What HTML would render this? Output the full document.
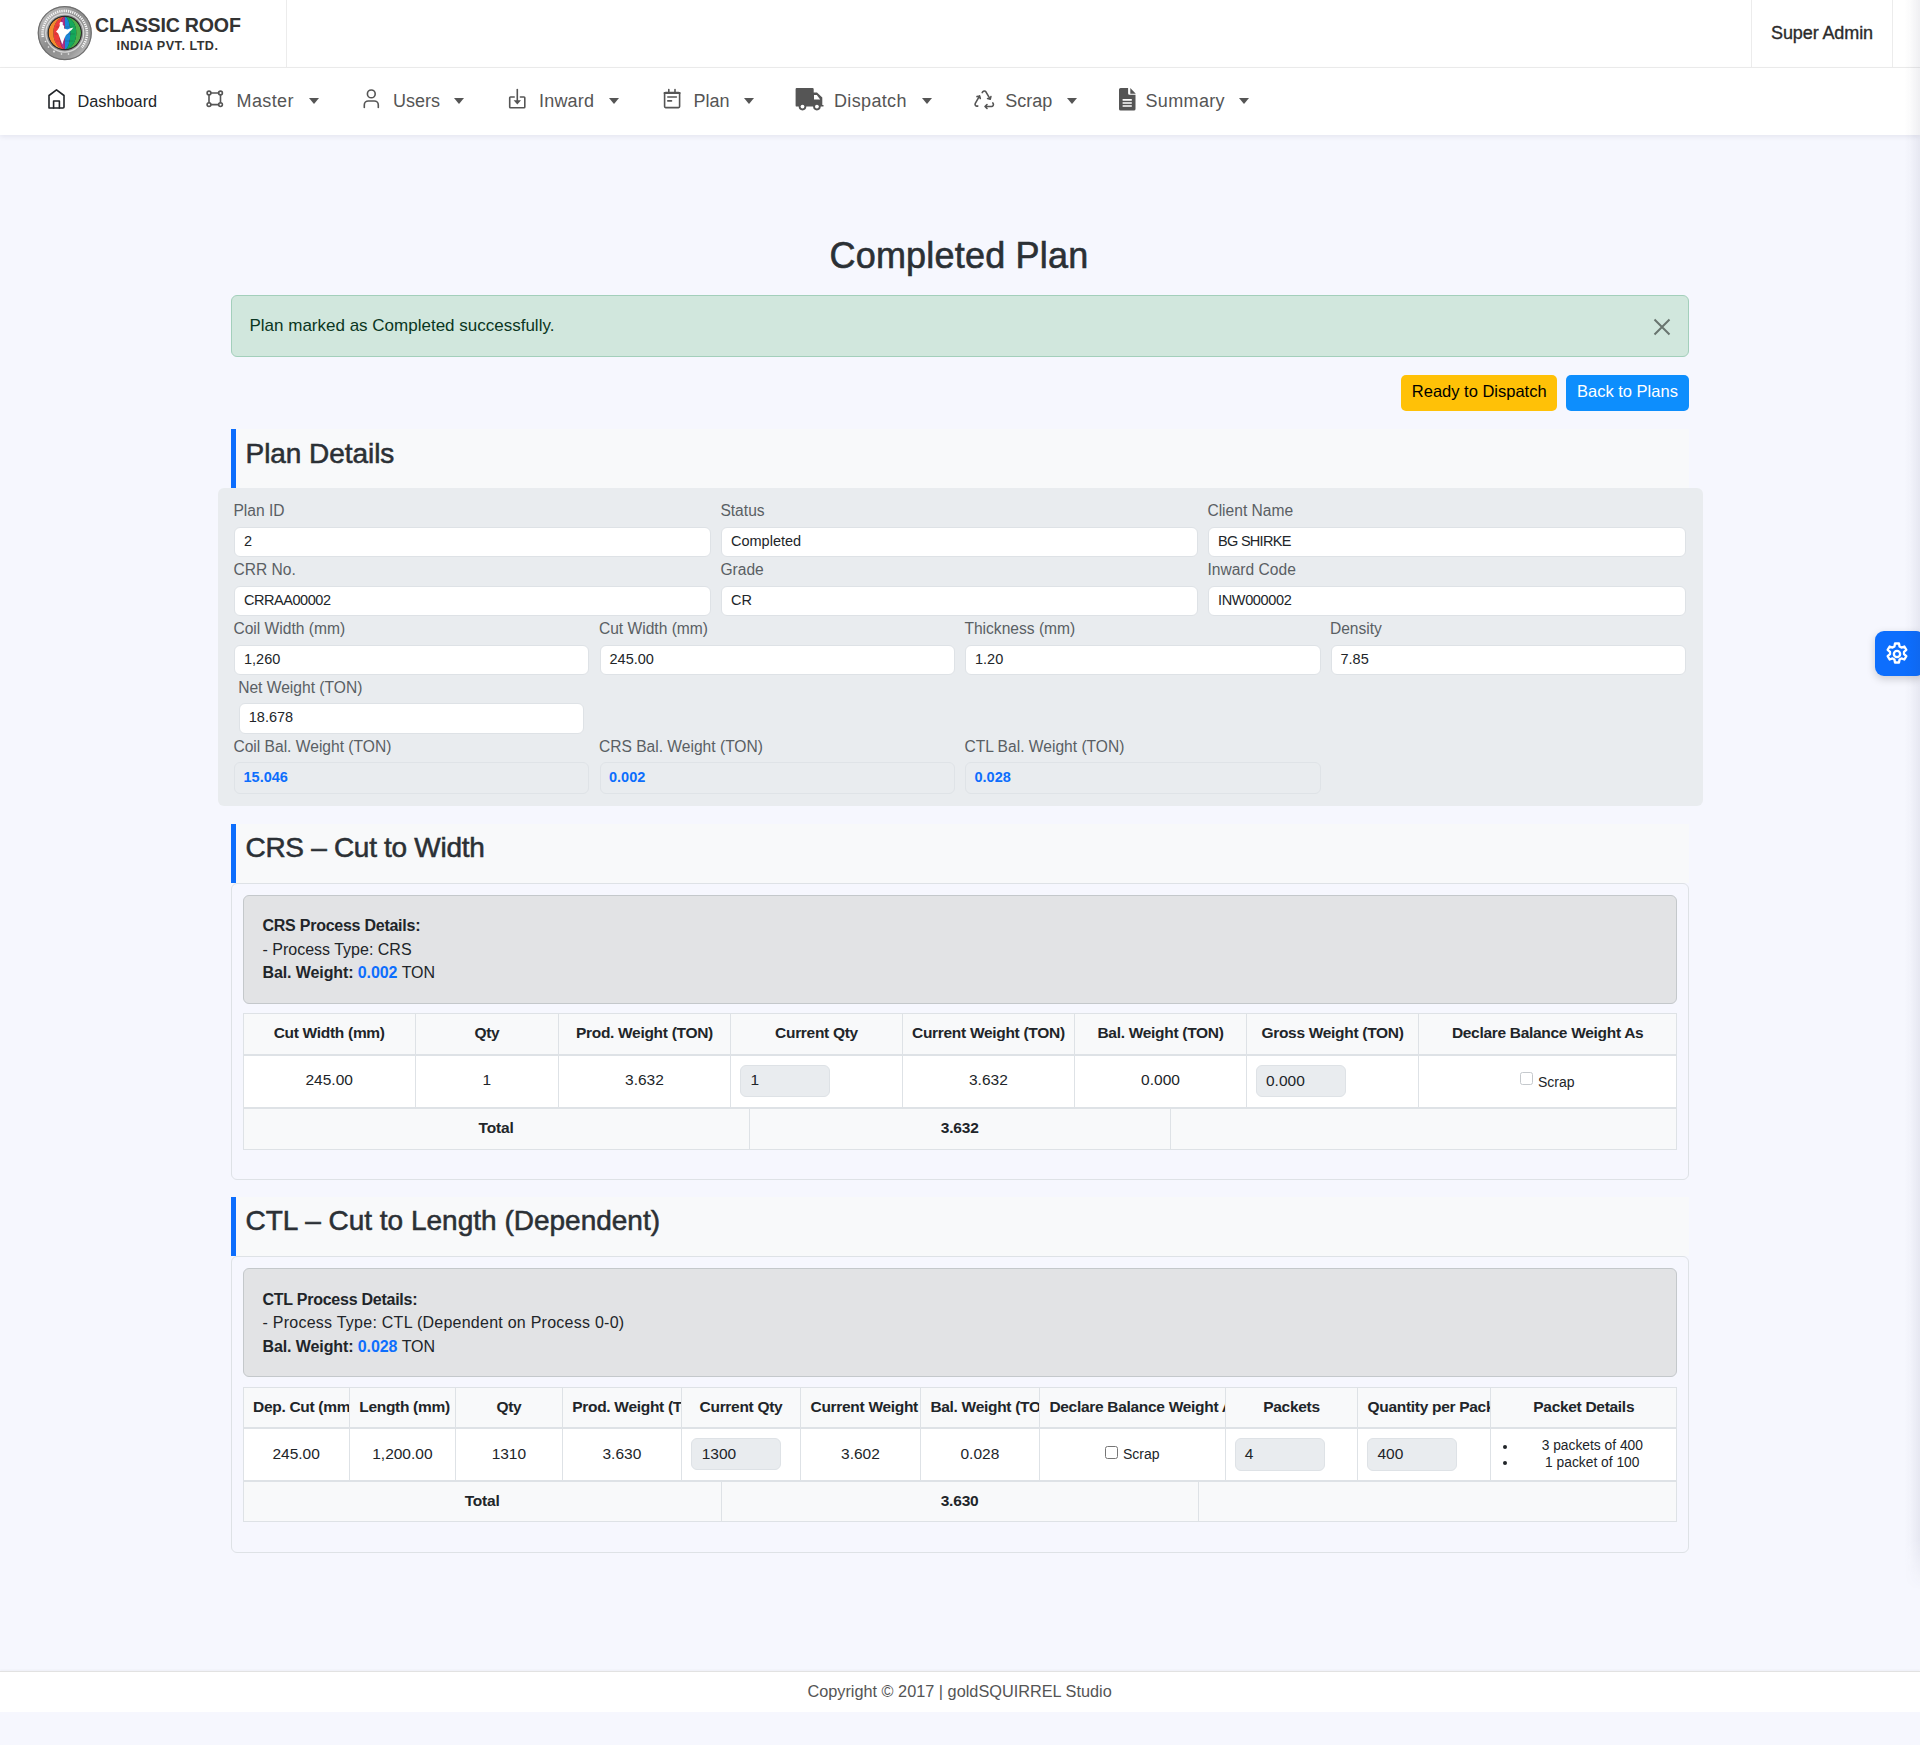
<!DOCTYPE html>
<html><head><meta charset="utf-8">
<style>
*{box-sizing:border-box;margin:0;padding:0}
html,body{width:1920px;height:1745px;overflow:hidden}
body{background:#f6f7fe;font-family:"Liberation Sans",sans-serif;color:#212529;position:relative;font-size:16px;line-height:1}
.t{position:absolute;white-space:nowrap;line-height:1}
.b{position:absolute}
.ico{position:absolute}
.caret{position:absolute;top:98px;width:0;height:0;border-left:5px solid transparent;border-right:5px solid transparent;border-top:6px solid #555}
.clip{position:absolute;overflow:hidden;white-space:nowrap;line-height:1}
</style></head><body>

<div class="b" style="left:0.00px;top:0.00px;width:1920.00px;height:67.00px;background:#fff"></div>
<div class="b" style="left:0.00px;top:67.00px;width:1920.00px;height:1.00px;background:#ededed"></div>
<svg class="ico" style="left:0;top:0" width="100" height="67" viewBox="0 0 100 67">
<defs>
<linearGradient id="ring" x1="0" y1="0" x2="1" y2="1"><stop offset="0" stop-color="#cfcfcf"/><stop offset=".45" stop-color="#8d8d8d"/><stop offset=".75" stop-color="#9a9a9a"/><stop offset="1" stop-color="#e2e2e2"/></linearGradient>
<clipPath id="gl"><circle cx="64.8" cy="33.0" r="16.2"/></clipPath>
</defs>
<circle cx="64.75" cy="33.1" r="27" fill="url(#ring)"/>
<circle cx="64.75" cy="33.1" r="26.5" fill="none" stroke="#6f6f6f" stroke-width="1.2"/>
<circle cx="64.75" cy="33.1" r="19" fill="none" stroke="#f2f2f2" stroke-width="1.2" opacity=".7"/>
<path d="M42.89 36.95 A22.2 22.2 0 1 1 81.76 47.37" fill="none" stroke="#f4f4f4" stroke-width="2.6" stroke-dasharray="1.3 0.9"/>
<circle cx="64.8" cy="33.0" r="17.2" fill="#2a2a2a"/>
<g clip-path="url(#gl)"><path d="M64.80 16.80 A16.20 16.20 0 0 1 64.80 49.20 A11.50 16.20 0 0 0 64.80 16.80Z" fill="#4fae4a"/><path d="M64.80 16.80 A11.50 16.20 0 0 1 64.80 49.20 A5.50 16.20 0 0 0 64.80 16.80Z" fill="#14a85a"/><path d="M64.80 16.80 A5.50 16.20 0 0 1 64.80 49.20 Z" fill="#1a86d6"/><path d="M64.80 16.80 A5.50 16.20 0 0 0 64.80 49.20 Z" fill="#b02f8a"/><path d="M64.80 16.80 A11.50 16.20 0 0 0 64.80 49.20 A5.50 16.20 0 0 1 64.80 16.80Z" fill="#ee3b39"/><path d="M64.80 16.80 A16.20 16.20 0 0 0 64.80 49.20 A11.50 16.20 0 0 1 64.80 16.80Z" fill="#f28a2e"/>
<path d="M56.3 27.0 H73.3 M54.8 34.0 H74.8 M56.3 41.0 H73.3" stroke="#333" stroke-width=".5" opacity=".5"/>
</g>
<path fill="#fff" d="M60.5 21.8 L63 22.6 L62.6 24.5 L64.2 26.2 L64 28.6 L67.5 29.5 L70.5 28.2 L73.4 27.6 L71.5 30 L69.6 31.5 L68.2 33.2 L66 35 L64.5 38 L63.2 41.5 L62.4 44.6 L61 41 L59.5 37 L58.2 33.5 L56 31.6 L57.5 30 L58.8 28 L59.8 25.5 L59.5 23.5 Z"/>
<g fill="#fff" opacity=".85"><circle cx="45.5" cy="41.5" r=".8"/><circle cx="48.5" cy="47" r=".8"/><circle cx="54" cy="51.5" r=".9"/><circle cx="61.5" cy="54" r=".8"/><circle cx="68.5" cy="54" r=".8"/></g>
</svg>
<div class="t" style="left:95.00px;top:16.40px;font-size:19.6px;color:#333;font-weight:700;letter-spacing:-0.2px;">CLASSIC ROOF</div>
<div class="t" style="left:116.50px;top:39.63px;font-size:12.6px;color:#333;font-weight:700;letter-spacing:0.5px;">INDIA PVT. LTD.</div>
<div class="b" style="left:286.00px;top:0.00px;width:1.00px;height:67.00px;background:#ececec"></div>
<div class="b" style="left:1751.00px;top:0.00px;width:1.00px;height:67.00px;background:#ececec"></div>
<div class="b" style="left:1892.00px;top:0.00px;width:1.00px;height:67.00px;background:#ececec"></div>
<div class="t" style="left:1771.00px;top:23.96px;font-size:18px;color:#2b2b2b;letter-spacing:-0.1px;-webkit-text-stroke:0.35px #2b2b2b;">Super Admin</div>
<div class="b" style="left:0.00px;top:68.00px;width:1920.00px;height:67.00px;background:#fff;box-shadow:0 2px 5px rgba(20,20,60,.07)"></div>
<div class="t" style="left:77.50px;top:92.50px;font-size:16.3px;color:#212529;">Dashboard</div>
<div class="t" style="left:236.50px;top:91.76px;font-size:18px;color:#555;letter-spacing:0.4px;">Master</div>
<div class="caret" style="left:309px"></div>
<div class="t" style="left:393.00px;top:91.76px;font-size:18px;color:#555;">Users</div>
<div class="caret" style="left:454px"></div>
<div class="t" style="left:539.00px;top:91.76px;font-size:18px;color:#555;letter-spacing:0.2px;">Inward</div>
<div class="caret" style="left:608.5px"></div>
<div class="t" style="left:693.50px;top:91.76px;font-size:18px;color:#555;">Plan</div>
<div class="caret" style="left:744px"></div>
<div class="t" style="left:834.00px;top:91.76px;font-size:18px;color:#555;letter-spacing:0.35px;">Dispatch</div>
<div class="caret" style="left:922px"></div>
<div class="t" style="left:1005.30px;top:91.76px;font-size:18px;color:#555;">Scrap</div>
<div class="caret" style="left:1067px"></div>
<div class="t" style="left:1145.50px;top:91.76px;font-size:18px;color:#555;letter-spacing:0.35px;">Summary</div>
<div class="caret" style="left:1239px"></div>
<svg class="ico" style="left:0;top:0" width="1300" height="135" viewBox="0 0 1300 135">
<g fill="none" stroke-width="1.6" stroke-linejoin="round" stroke-linecap="round">
<path stroke="#212529" d="M49 108 V95.5 L56.5 89.8 L64 95.5 V107 a1 1 0 0 1 -1 1 H50 a1 1 0 0 1 -1 -1Z"/>
<path stroke="#212529" d="M53.6 108 V101 H59.4 V108"/>
<g stroke="#555">
<circle cx="209" cy="93" r="1.9"/><circle cx="220.5" cy="93" r="1.9"/><circle cx="209" cy="104.6" r="1.9"/><circle cx="220.5" cy="104.6" r="1.9"/>
<path d="M210.9 93H218.6M210.9 104.6H218.6M209 94.9V102.7M220.5 94.9V102.7"/>
<circle cx="371.3" cy="93.9" r="3.9"/>
<path d="M364.3 107.5 V105 a4 4 0 0 1 4 -4 h6 a4 4 0 0 1 4 4 V107.5"/>
<path d="M514.2 97 H510.5 a0.8 0.8 0 0 0 -0.8 0.8 V107 a0.8 0.8 0 0 0 0.8 0.8 H524 a0.8 0.8 0 0 0 0.8 -0.8 V97.8 a0.8 0.8 0 0 0 -0.8 -0.8 H520.4"/>
<path d="M517.3 89.5 V101"/>
<rect x="664.6" y="92.6" width="15" height="15" rx="1"/>
<path d="M668.8 89.5V92M675 89.5V92M667.8 97H676.4M667.8 100.9H671.5"/>
<path d="M664.6 93 H679.6" stroke-width="2.2"/>
<path d="M987 104.5l-2 2l2 2 M985 106.5h6.6a1.9 1.9 0 0 0 1.7 -2.6l-.5 -1 M980.3 98.5l-.7 -2.6l-2.6 .7 M979.6 95.9l-4.3 7.4a1.9 1.9 0 0 0 1.4 2.8l1.1 0 M987.6 98.5l2.6 .7l.7 -2.6 M990.2 99.2l-4.3 -7.4a1.9 1.9 0 0 0 -3.1 -.1l-.6 .9"/>
</g></g>
<path fill="#555" d="M513.6 100.3 H521 L517.3 104.6Z"/>
<g fill="#555">
<path d="M797 88 H812.5 a1.2 1.2 0 0 1 1.2 1.2 V92.4 H817 L822.3 97.4 V104.9 H823.5 V106.6 H796.8 a1.2 1.2 0 0 1 -1.2 -1.2 V89.2 a1.2 1.2 0 0 1 1.4 -1.2Z"/>
<circle cx="802.5" cy="106.6" r="3.8"/><circle cx="816.9" cy="106.6" r="3.8"/>
</g>
<path fill="#fff" d="M814 94.9 H816.8 L820.2 99.5 H814Z"/>
<circle cx="802.5" cy="106.6" r="1.9" fill="#fff"/><circle cx="816.9" cy="106.6" r="1.9" fill="#fff"/>
<path fill="#555" d="M1120.6 87.9 H1128.1 V93.3 a1.5 1.5 0 0 0 1.5 1.5 H1135.5 V109 a1.6 1.6 0 0 1 -1.6 1.6 H1120.6 a1.6 1.6 0 0 1 -1.6 -1.6 V89.5 a1.6 1.6 0 0 1 1.6 -1.6Z"/>
<path fill="#555" d="M1130.3 88 L1135.8 93.7 H1130.3Z"/>
<path stroke="#fff" stroke-width="1.7" d="M1122.6 99.9H1131.8M1122.6 103H1131.8M1122.6 106H1131.8"/>
</svg>
<div class="t" style="left:829.50px;top:237.52px;font-size:36px;color:#2b3035;letter-spacing:0.2px;-webkit-text-stroke:0.6px #2b3035;">Completed Plan</div>
<div class="b" style="left:231.00px;top:295.00px;width:1458.00px;height:62.00px;background:#d1e7dd;border:1px solid #a3cfbb;border-radius:6px"></div>
<div class="t" style="left:249.50px;top:316.61px;font-size:17px;color:#0a3622;">Plan marked as Completed successfully.</div>
<svg class="ico" style="left:1652px;top:317px" width="20" height="20" viewBox="0 0 20 20"><path d="M2.5 2.5L17.5 17.5M17.5 2.5L2.5 17.5" stroke="#69756f" stroke-width="2"/></svg>
<div class="b" style="left:1401.00px;top:375.00px;width:156.00px;height:36.00px;background:#ffc107;border-radius:5px"></div>
<div class="t" style="left:1411.80px;top:382.83px;font-size:16.5px;color:#000;">Ready to Dispatch</div>
<div class="b" style="left:1566.00px;top:375.00px;width:123.00px;height:36.00px;background:#0d8efd;border-radius:5px"></div>
<div class="t" style="left:1577.00px;top:382.83px;font-size:16.5px;color:#fff;">Back to Plans</div>
<div class="b" style="left:231.00px;top:429.00px;width:1458.00px;height:59.00px;background:#f8f9fa"></div>
<div class="b" style="left:231.00px;top:429.00px;width:5.00px;height:59.00px;background:#0d6efd"></div>
<div class="t" style="left:245.50px;top:439.59px;font-size:28px;color:#2b3035;letter-spacing:-0.05px;-webkit-text-stroke:0.55px #2b3035;">Plan Details</div>
<div class="b" style="left:218.00px;top:488.00px;width:1485.00px;height:318.00px;background:#e9ecef;border-radius:6px"></div>
<div class="t" style="left:233.40px;top:502.79px;font-size:15.6px;color:#5a5f64;">Plan ID</div>
<div class="b" style="left:234.00px;top:527.00px;width:477.00px;height:30.00px;background:#fff;border:1px solid #dee2e6;border-radius:6px"></div>
<div class="t" style="left:244.00px;top:533.92px;font-size:14.5px;color:#212529;">2</div>
<div class="t" style="left:720.40px;top:502.79px;font-size:15.6px;color:#5a5f64;">Status</div>
<div class="b" style="left:721.00px;top:527.00px;width:477.00px;height:30.00px;background:#fff;border:1px solid #dee2e6;border-radius:6px"></div>
<div class="t" style="left:731.00px;top:533.92px;font-size:14.5px;color:#212529;">Completed</div>
<div class="t" style="left:1207.40px;top:502.79px;font-size:15.6px;color:#5a5f64;">Client Name</div>
<div class="b" style="left:1208.00px;top:527.00px;width:478.00px;height:30.00px;background:#fff;border:1px solid #dee2e6;border-radius:6px"></div>
<div class="t" style="left:1218.00px;top:533.92px;font-size:14.5px;color:#212529;letter-spacing:-0.7px;">BG SHIRKE</div>
<div class="t" style="left:233.40px;top:562.09px;font-size:15.6px;color:#5a5f64;">CRR No.</div>
<div class="b" style="left:234.00px;top:586.00px;width:477.00px;height:30.00px;background:#fff;border:1px solid #dee2e6;border-radius:6px"></div>
<div class="t" style="left:244.00px;top:592.92px;font-size:14.5px;color:#212529;letter-spacing:-0.45px;">CRRAA00002</div>
<div class="t" style="left:720.40px;top:562.09px;font-size:15.6px;color:#5a5f64;">Grade</div>
<div class="b" style="left:721.00px;top:586.00px;width:477.00px;height:30.00px;background:#fff;border:1px solid #dee2e6;border-radius:6px"></div>
<div class="t" style="left:731.00px;top:592.92px;font-size:14.5px;color:#212529;">CR</div>
<div class="t" style="left:1207.40px;top:562.09px;font-size:15.6px;color:#5a5f64;">Inward Code</div>
<div class="b" style="left:1208.00px;top:586.00px;width:478.00px;height:30.00px;background:#fff;border:1px solid #dee2e6;border-radius:6px"></div>
<div class="t" style="left:1218.00px;top:592.92px;font-size:14.5px;color:#212529;letter-spacing:-0.35px;">INW000002</div>
<div class="t" style="left:233.40px;top:620.79px;font-size:15.6px;color:#5a5f64;">Coil Width (mm)</div>
<div class="b" style="left:234.00px;top:645.00px;width:355.00px;height:30.00px;background:#fff;border:1px solid #dee2e6;border-radius:6px"></div>
<div class="t" style="left:244.00px;top:651.92px;font-size:14.5px;color:#212529;">1,260</div>
<div class="t" style="left:598.90px;top:620.79px;font-size:15.6px;color:#5a5f64;">Cut Width (mm)</div>
<div class="b" style="left:599.50px;top:645.00px;width:355.50px;height:30.00px;background:#fff;border:1px solid #dee2e6;border-radius:6px"></div>
<div class="t" style="left:609.50px;top:651.92px;font-size:14.5px;color:#212529;">245.00</div>
<div class="t" style="left:964.40px;top:620.79px;font-size:15.6px;color:#5a5f64;">Thickness (mm)</div>
<div class="b" style="left:965.00px;top:645.00px;width:355.50px;height:30.00px;background:#fff;border:1px solid #dee2e6;border-radius:6px"></div>
<div class="t" style="left:975.00px;top:651.92px;font-size:14.5px;color:#212529;">1.20</div>
<div class="t" style="left:1329.90px;top:620.79px;font-size:15.6px;color:#5a5f64;">Density</div>
<div class="b" style="left:1330.50px;top:645.00px;width:355.50px;height:30.00px;background:#fff;border:1px solid #dee2e6;border-radius:6px"></div>
<div class="t" style="left:1340.50px;top:651.92px;font-size:14.5px;color:#212529;">7.85</div>
<div class="t" style="left:238.15px;top:679.79px;font-size:15.6px;color:#5a5f64;">Net Weight (TON)</div>
<div class="b" style="left:238.75px;top:703.00px;width:345.25px;height:30.50px;background:#fff;border:1px solid #dee2e6;border-radius:6px"></div>
<div class="t" style="left:248.75px;top:709.92px;font-size:14.5px;color:#212529;">18.678</div>
<div class="t" style="left:233.40px;top:738.79px;font-size:15.6px;color:#5a5f64;">Coil Bal. Weight (TON)</div>
<div class="b" style="left:234.00px;top:761.50px;width:355.00px;height:32.00px;background:#e9ecef;border:1px solid #dfe3e7;border-radius:6px"></div>
<div class="t" style="left:243.50px;top:770.22px;font-size:14.5px;color:#0d6efd;font-weight:700;">15.046</div>
<div class="t" style="left:598.90px;top:738.79px;font-size:15.6px;color:#5a5f64;">CRS Bal. Weight (TON)</div>
<div class="b" style="left:599.50px;top:761.50px;width:355.50px;height:32.00px;background:#e9ecef;border:1px solid #dfe3e7;border-radius:6px"></div>
<div class="t" style="left:609.00px;top:770.22px;font-size:14.5px;color:#0d6efd;font-weight:700;">0.002</div>
<div class="t" style="left:964.40px;top:738.79px;font-size:15.6px;color:#5a5f64;">CTL Bal. Weight (TON)</div>
<div class="b" style="left:965.00px;top:761.50px;width:355.50px;height:32.00px;background:#e9ecef;border:1px solid #dfe3e7;border-radius:6px"></div>
<div class="t" style="left:974.50px;top:770.22px;font-size:14.5px;color:#0d6efd;font-weight:700;">0.028</div>
<div class="b" style="left:231.00px;top:824.00px;width:1458.00px;height:59.00px;background:#f8f9fa"></div>
<div class="b" style="left:231.00px;top:824.00px;width:5.00px;height:59.00px;background:#0d6efd"></div>
<div class="t" style="left:245.50px;top:834.39px;font-size:28px;color:#2b3035;letter-spacing:-0.3px;-webkit-text-stroke:0.55px #2b3035;">CRS – Cut to Width</div>
<div class="b" style="left:231.00px;top:883.00px;width:1458.00px;height:297.00px;border:1px solid #dee2e6;border-radius:6px"></div>
<div class="b" style="left:243.00px;top:895.00px;width:1434.00px;height:109.00px;background:#e2e3e5;border:1px solid #c4c8cb;border-radius:6px"></div>
<div class="t" style="left:262.50px;top:918.45px;font-size:16px;color:#212529;font-weight:700;letter-spacing:-0.25px;">CRS Process Details:</div>
<div class="t" style="left:262.50px;top:941.95px;font-size:16px;color:#212529;">- Process Type: CRS</div>
<div class="t" style="left:262.50px;top:965.45px;font-size:16px;color:#212529;font-weight:700;letter-spacing:-0.1px;">Bal. Weight: <span style="color:#0d6efd">0.002</span> <span style="font-weight:400">TON</span></div>
<div class="b" style="left:243.00px;top:1013.00px;width:1434.00px;height:42.00px;background:#f8f9fa;border:1px solid #dee2e6;border-bottom:none"></div>
<div class="b" style="left:243.00px;top:1055.00px;width:1434.00px;height:52.50px;background:#fff;border-left:1px solid #dee2e6;border-right:1px solid #dee2e6"></div>
<div class="b" style="left:243.00px;top:1107.50px;width:1434.00px;height:42.00px;background:#f8f9fa;border:1px solid #dee2e6"></div>
<div class="b" style="left:243.00px;top:1054.00px;width:1434.00px;height:2.00px;background:#dee2e6"></div>
<div class="b" style="left:243.00px;top:1106.50px;width:1434.00px;height:2.00px;background:#dee2e6"></div>
<div class="b" style="left:414.90px;top:1013.00px;width:1.00px;height:94.50px;background:#dee2e6"></div>
<div class="b" style="left:557.90px;top:1013.00px;width:1.00px;height:94.50px;background:#dee2e6"></div>
<div class="b" style="left:730.00px;top:1013.00px;width:1.00px;height:94.50px;background:#dee2e6"></div>
<div class="b" style="left:902.00px;top:1013.00px;width:1.00px;height:94.50px;background:#dee2e6"></div>
<div class="b" style="left:1073.80px;top:1013.00px;width:1.00px;height:94.50px;background:#dee2e6"></div>
<div class="b" style="left:1246.20px;top:1013.00px;width:1.00px;height:94.50px;background:#dee2e6"></div>
<div class="b" style="left:1417.80px;top:1013.00px;width:1.00px;height:94.50px;background:#dee2e6"></div>
<div class="b" style="left:748.60px;top:1107.50px;width:1.00px;height:42.00px;background:#dee2e6"></div>
<div class="b" style="left:1169.80px;top:1107.50px;width:1.00px;height:42.00px;background:#dee2e6"></div>
<div class="t" style="left:-70.80px;width:800px;text-align:center;top:1025.18px;font-size:15.5px;color:#212529;font-weight:700;letter-spacing:-0.3px;">Cut Width (mm)</div>
<div class="t" style="left:86.90px;width:800px;text-align:center;top:1025.18px;font-size:15.5px;color:#212529;font-weight:700;letter-spacing:-0.3px;">Qty</div>
<div class="t" style="left:244.45px;width:800px;text-align:center;top:1025.18px;font-size:15.5px;color:#212529;font-weight:700;letter-spacing:-0.3px;">Prod. Weight (TON)</div>
<div class="t" style="left:416.50px;width:800px;text-align:center;top:1025.18px;font-size:15.5px;color:#212529;font-weight:700;letter-spacing:-0.3px;">Current Qty</div>
<div class="t" style="left:588.40px;width:800px;text-align:center;top:1025.18px;font-size:15.5px;color:#212529;font-weight:700;letter-spacing:-0.3px;">Current Weight (TON)</div>
<div class="t" style="left:760.50px;width:800px;text-align:center;top:1025.18px;font-size:15.5px;color:#212529;font-weight:700;letter-spacing:-0.3px;">Bal. Weight (TON)</div>
<div class="t" style="left:932.50px;width:800px;text-align:center;top:1025.18px;font-size:15.5px;color:#212529;font-weight:700;letter-spacing:-0.3px;">Gross Weight (TON)</div>
<div class="t" style="left:1147.65px;width:800px;text-align:center;top:1025.18px;font-size:15.5px;color:#212529;font-weight:700;letter-spacing:-0.3px;">Declare Balance Weight As</div>
<div class="t" style="left:-70.80px;width:800px;text-align:center;top:1072.08px;font-size:15.5px;color:#212529;">245.00</div>
<div class="t" style="left:86.90px;width:800px;text-align:center;top:1072.08px;font-size:15.5px;color:#212529;">1</div>
<div class="t" style="left:244.45px;width:800px;text-align:center;top:1072.08px;font-size:15.5px;color:#212529;">3.632</div>
<div class="t" style="left:588.40px;width:800px;text-align:center;top:1072.08px;font-size:15.5px;color:#212529;">3.632</div>
<div class="t" style="left:760.50px;width:800px;text-align:center;top:1072.08px;font-size:15.5px;color:#212529;">0.000</div>
<div class="b" style="left:740.00px;top:1065.40px;width:89.60px;height:32.10px;background:#e9ecef;border:1px solid #dee2e6;border-radius:6px"></div>
<div class="t" style="left:750.60px;top:1072.08px;font-size:15.5px;color:#212529;">1</div>
<div class="b" style="left:1256.00px;top:1065.30px;width:89.70px;height:32.00px;background:#e9ecef;border:1px solid #dee2e6;border-radius:6px"></div>
<div class="t" style="left:1266.00px;top:1072.58px;font-size:15.5px;color:#212529;">0.000</div>
<div class="b" style="left:1520.00px;top:1072.30px;width:13.00px;height:13.00px;background:#fff;border:1px solid #c5c9cd;border-radius:2.5px"></div>
<div class="t" style="left:1538.00px;top:1074.85px;font-size:14px;color:#212529;">Scrap</div>
<div class="t" style="left:96.05px;width:800px;text-align:center;top:1119.78px;font-size:15.5px;color:#212529;font-weight:700;letter-spacing:-0.2px;">Total</div>
<div class="t" style="left:559.70px;width:800px;text-align:center;top:1119.78px;font-size:15.5px;color:#212529;font-weight:700;letter-spacing:-0.2px;">3.632</div>
<div class="b" style="left:231.00px;top:1197.00px;width:1458.00px;height:59.00px;background:#f8f9fa"></div>
<div class="b" style="left:231.00px;top:1197.00px;width:5.00px;height:59.00px;background:#0d6efd"></div>
<div class="t" style="left:245.50px;top:1207.04px;font-size:28px;color:#2b3035;-webkit-text-stroke:0.55px #2b3035;">CTL – Cut to Length (Dependent)</div>
<div class="b" style="left:231.00px;top:1256.00px;width:1458.00px;height:297.00px;border:1px solid #dee2e6;border-radius:6px"></div>
<div class="b" style="left:243.00px;top:1268.25px;width:1434.00px;height:109.00px;background:#e2e3e5;border:1px solid #c4c8cb;border-radius:6px"></div>
<div class="t" style="left:262.50px;top:1291.70px;font-size:16px;color:#212529;font-weight:700;letter-spacing:-0.25px;">CTL Process Details:</div>
<div class="t" style="left:262.50px;top:1315.20px;font-size:16px;color:#212529;letter-spacing:0.25px;">- Process Type: CTL (Dependent on Process 0-0)</div>
<div class="t" style="left:262.50px;top:1338.70px;font-size:16px;color:#212529;font-weight:700;letter-spacing:-0.1px;">Bal. Weight: <span style="color:#0d6efd">0.028</span> <span style="font-weight:400">TON</span></div>
<div class="b" style="left:243.00px;top:1386.75px;width:1434.00px;height:40.75px;background:#f8f9fa;border:1px solid #dee2e6;border-bottom:none"></div>
<div class="b" style="left:243.00px;top:1427.50px;width:1434.00px;height:53.25px;background:#fff;border-left:1px solid #dee2e6;border-right:1px solid #dee2e6"></div>
<div class="b" style="left:243.00px;top:1480.75px;width:1434.00px;height:41.25px;background:#f8f9fa;border:1px solid #dee2e6"></div>
<div class="b" style="left:243.00px;top:1426.50px;width:1434.00px;height:2.00px;background:#dee2e6"></div>
<div class="b" style="left:243.00px;top:1479.75px;width:1434.00px;height:2.00px;background:#dee2e6"></div>
<div class="b" style="left:348.75px;top:1386.75px;width:1.00px;height:94.00px;background:#dee2e6"></div>
<div class="b" style="left:455.00px;top:1386.75px;width:1.00px;height:94.00px;background:#dee2e6"></div>
<div class="b" style="left:561.75px;top:1386.75px;width:1.00px;height:94.00px;background:#dee2e6"></div>
<div class="b" style="left:681.00px;top:1386.75px;width:1.00px;height:94.00px;background:#dee2e6"></div>
<div class="b" style="left:800.00px;top:1386.75px;width:1.00px;height:94.00px;background:#dee2e6"></div>
<div class="b" style="left:919.90px;top:1386.75px;width:1.00px;height:94.00px;background:#dee2e6"></div>
<div class="b" style="left:1038.90px;top:1386.75px;width:1.00px;height:94.00px;background:#dee2e6"></div>
<div class="b" style="left:1225.00px;top:1386.75px;width:1.00px;height:94.00px;background:#dee2e6"></div>
<div class="b" style="left:1357.00px;top:1386.75px;width:1.00px;height:94.00px;background:#dee2e6"></div>
<div class="b" style="left:1490.00px;top:1386.75px;width:1.00px;height:94.00px;background:#dee2e6"></div>
<div class="b" style="left:720.70px;top:1480.75px;width:1.00px;height:41.25px;background:#dee2e6"></div>
<div class="b" style="left:1197.50px;top:1480.75px;width:1.00px;height:41.25px;background:#dee2e6"></div>
<div class="clip" style="left:243.50px;top:1386.75px;width:105.25px;height:40px"><div style="position:absolute;left:9.5px;width:86.25px;top:12.13px;font-size:15.5px;font-weight:700;letter-spacing:-0.3px;color:#212529;text-align:center" class="hc">Dep. Cut (mm)</div></div>
<div class="clip" style="left:349.75px;top:1386.75px;width:105.25px;height:40px"><div style="position:absolute;left:9.5px;width:86.25px;top:12.13px;font-size:15.5px;font-weight:700;letter-spacing:-0.3px;color:#212529;text-align:center" class="hc">Length (mm)</div></div>
<div class="clip" style="left:456.00px;top:1386.75px;width:105.75px;height:40px"><div style="position:absolute;left:9.5px;width:86.75px;top:12.13px;font-size:15.5px;font-weight:700;letter-spacing:-0.3px;color:#212529;text-align:center" class="hc">Qty</div></div>
<div class="clip" style="left:562.75px;top:1386.75px;width:118.25px;height:40px"><div style="position:absolute;left:9.5px;width:99.25px;top:12.13px;font-size:15.5px;font-weight:700;letter-spacing:-0.3px;color:#212529;text-align:center" class="hc">Prod. Weight (TON)</div></div>
<div class="clip" style="left:682.00px;top:1386.75px;width:118.00px;height:40px"><div style="position:absolute;left:9.5px;width:99.00px;top:12.13px;font-size:15.5px;font-weight:700;letter-spacing:-0.3px;color:#212529;text-align:center" class="hc">Current Qty</div></div>
<div class="clip" style="left:801.00px;top:1386.75px;width:118.90px;height:40px"><div style="position:absolute;left:9.5px;width:99.90px;top:12.13px;font-size:15.5px;font-weight:700;letter-spacing:-0.3px;color:#212529;text-align:center" class="hc">Current Weight (TON)</div></div>
<div class="clip" style="left:920.90px;top:1386.75px;width:118.00px;height:40px"><div style="position:absolute;left:9.5px;width:99.00px;top:12.13px;font-size:15.5px;font-weight:700;letter-spacing:-0.3px;color:#212529;text-align:center" class="hc">Bal. Weight (TON)</div></div>
<div class="clip" style="left:1039.90px;top:1386.75px;width:185.10px;height:40px"><div style="position:absolute;left:9.5px;width:166.10px;top:12.13px;font-size:15.5px;font-weight:700;letter-spacing:-0.3px;color:#212529;text-align:center" class="hc">Declare Balance Weight As</div></div>
<div class="clip" style="left:1226.00px;top:1386.75px;width:131.00px;height:40px"><div style="position:absolute;left:9.5px;width:112.00px;top:12.13px;font-size:15.5px;font-weight:700;letter-spacing:-0.3px;color:#212529;text-align:center" class="hc">Packets</div></div>
<div class="clip" style="left:1358.00px;top:1386.75px;width:132.00px;height:40px"><div style="position:absolute;left:9.5px;width:113.00px;top:12.13px;font-size:15.5px;font-weight:700;letter-spacing:-0.3px;color:#212529;text-align:center" class="hc">Quantity per Packet</div></div>
<div class="clip" style="left:1491.00px;top:1386.75px;width:185.50px;height:40px"><div style="position:absolute;left:9.5px;width:166.50px;top:12.13px;font-size:15.5px;font-weight:700;letter-spacing:-0.3px;color:#212529;text-align:center" class="hc">Packet Details</div></div>
<div class="t" style="left:-103.88px;width:800px;text-align:center;top:1446.38px;font-size:15.5px;color:#212529;">245.00</div>
<div class="t" style="left:2.38px;width:800px;text-align:center;top:1446.38px;font-size:15.5px;color:#212529;">1,200.00</div>
<div class="t" style="left:108.88px;width:800px;text-align:center;top:1446.38px;font-size:15.5px;color:#212529;">1310</div>
<div class="t" style="left:221.88px;width:800px;text-align:center;top:1446.38px;font-size:15.5px;color:#212529;">3.630</div>
<div class="t" style="left:460.45px;width:800px;text-align:center;top:1446.38px;font-size:15.5px;color:#212529;">3.602</div>
<div class="t" style="left:579.90px;width:800px;text-align:center;top:1446.38px;font-size:15.5px;color:#212529;">0.028</div>
<div class="b" style="left:691.20px;top:1438.30px;width:89.80px;height:32.10px;background:#e9ecef;border:1px solid #dee2e6;border-radius:6px"></div>
<div class="t" style="left:701.70px;top:1446.18px;font-size:15.5px;color:#212529;">1300</div>
<div class="b" style="left:1235.00px;top:1438.00px;width:89.60px;height:32.60px;background:#e9ecef;border:1px solid #dee2e6;border-radius:6px"></div>
<div class="t" style="left:1244.70px;top:1446.18px;font-size:15.5px;color:#212529;">4</div>
<div class="b" style="left:1367.00px;top:1438.00px;width:89.70px;height:32.60px;background:#e9ecef;border:1px solid #dee2e6;border-radius:6px"></div>
<div class="t" style="left:1377.50px;top:1446.18px;font-size:15.5px;color:#212529;">400</div>
<div class="b" style="left:1105.30px;top:1445.60px;width:13.00px;height:13.00px;background:#fff;border:1px solid #767676;border-radius:2.5px"></div>
<div class="t" style="left:1123.00px;top:1446.85px;font-size:14px;color:#212529;">Scrap</div>
<div class="b" style="left:1503.00px;top:1445.00px;width:4.00px;height:4.00px;background:#212529;border-radius:50%"></div>
<div class="b" style="left:1503.00px;top:1461.00px;width:4.00px;height:4.00px;background:#212529;border-radius:50%"></div>
<div class="t" style="left:1192.30px;width:800px;text-align:center;top:1439.12px;font-size:13.8px;color:#212529;">3 packets of 400</div>
<div class="t" style="left:1192.30px;width:800px;text-align:center;top:1455.52px;font-size:13.8px;color:#212529;">1 packet of 100</div>
<div class="t" style="left:82.10px;width:800px;text-align:center;top:1493.13px;font-size:15.5px;color:#212529;font-weight:700;letter-spacing:-0.2px;">Total</div>
<div class="t" style="left:559.60px;width:800px;text-align:center;top:1493.13px;font-size:15.5px;color:#212529;font-weight:700;letter-spacing:-0.2px;">3.630</div>
<div class="b" style="left:1875px;top:631px;width:50px;height:45px;background:#0d6efd;border-radius:9px;box-shadow:0 3px 8px rgba(0,0,0,.18)"></div>
<svg class="ico" style="left:1883px;top:639.5px" width="28" height="28" viewBox="0 0 24 24"><path fill="none" stroke="#fff" stroke-width="2" stroke-linejoin="round" d="M10.3 3h3.4l.5 2.6 1.6.9 2.5-.9 1.7 2.9-2 1.7v1.9l2 1.7-1.7 2.9-2.5-.9-1.6.9-.5 2.6h-3.4l-.5-2.6-1.6-.9-2.5.9-1.7-2.9 2-1.7v-1.9l-2-1.7 1.7-2.9 2.5.9 1.6-.9z"/><circle cx="12" cy="12" r="2.7" fill="none" stroke="#fff" stroke-width="2"/></svg>
<div class="b" style="left:1904px;top:0;width:16px;height:1590px;background:linear-gradient(to right,rgba(40,40,80,0),rgba(40,40,80,.02) 40%,rgba(40,40,80,.075));-webkit-mask-image:linear-gradient(to bottom,#000 0,#000 1540px,transparent 1590px)"></div>
<div class="b" style="left:0.00px;top:1671.00px;width:1920.00px;height:41.00px;background:#fff;border-top:1px solid #e2e2e2;box-shadow:0 -1px 2px rgba(0,0,0,.04)"></div>
<div class="t" style="left:807.40px;top:1683.40px;font-size:16.3px;color:#555;">Copyright © 2017 | goldSQUIRREL Studio</div>
</body></html>
